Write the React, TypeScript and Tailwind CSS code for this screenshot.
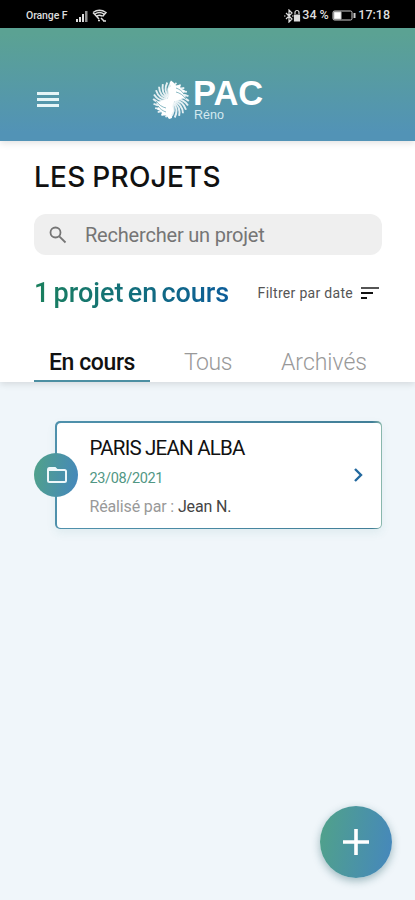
import React from "react";

const blades = Array.from({ length: 24 }, (_, i) => (i * 360) / 24);

function Swirl() {
  return (
    <svg viewBox="-20 -20 40 40" className="h-10 w-10">
      {blades.map((a) => (
        <path key={a} transform={`rotate(${a})`} d="M-.5 -4C-1.500 -9 1 -14 5.500 -17" fill="none" stroke="#fff" strokeWidth="1.900" opacity=".85" />
      ))}
      <path
        fill="#fff"
        d="M-1.500 -17L0 -19.500L2.500 -17.500L5 -14.500L9 -15L9.500 -11.500L14 -9.500L12 -6L15 -3L10 -1L4 1L1.500 5L2.500 11L.5 15L1 18L-2 19L-4.500 15.500L-9 15.500L-9.500 11.500L-14 9.500L-12 6L-15 3L-10 1L-4 -1L-1.500 -5L-3 -11L-.5 -14Z"
      />
      <path d="M5 -8C9 -7 12 -5 15 -1M5 -12C8 -11 11 -9 13 -6M-5 8C-9 7 -12 5 -15 1M-5 12C-8 11 -11 9 -13 6" fill="none" stroke="#589caa" strokeWidth=".7" />
    </svg>
  );
}

function StatusBar() {
  return (
    <div className="flex h-7 shrink-0 items-center bg-black pt-[3px] pl-[26px] text-[10.500px] font-medium text-[#ddd]">
      <span className="w-[50px] tracking-[-0.1px] whitespace-nowrap">Orange F</span>
      <svg viewBox="0 0 12 12" className="h-3 w-3" fill="#ddd">
        <path d="M0 9h2v3H0zM3 7h2v5H3zM6 4h2v8H6z" />
        <path d="M9 1h2.500v11H9z" opacity=".65" />
      </svg>
      <svg viewBox="0 0 15 13" className="ml-1 h-[13px] w-[15px]" fill="none" stroke="#ddd" strokeWidth="1.500">
        <path d="M1 3.500Q7.500 -1 14 3.500L10.500 7.500M1 3.500L7 10M3 5Q7.500 2 12 5M5 7Q7.500 5.500 10 7M6 11.500h2M9 9l3 3M11 12h3" />
      </svg>
      <div className="ml-auto flex items-center pr-[25px]">
        <svg viewBox="0 0 17 14" className="h-3.5 w-[17px]" fill="none" stroke="#ddd" strokeWidth="1.200">
          <path d="M2 4l6 6-3 3V1l3 3-6 6M0 7h1.500M8 7h1.500" />
          <path d="M11 5V3.500a2 2 0 0 1 4 0V5" />
          <path d="M10.500 6h5v6h-5z" fill="#ddd" />
        </svg>
        <span className="ml-px w-[30px] text-[12.500px] whitespace-nowrap">34 %</span>
        <svg viewBox="0 0 24 11" className="h-[11px] w-6" fill="none" stroke="#ccc">
          <rect x="1" y="1" width="19" height="9" rx="1.500" />
          <path d="M2 2h7v7H2z" fill="#fff" />
          <path d="M22.500 3v5" strokeWidth="2" />
        </svg>
        <span className="ml-0.5 text-[12.500px]">17:18</span>
      </div>
    </div>
  );
}

export default function App() {
  return (
    <div className="flex h-[900px] w-[415px] flex-col overflow-hidden bg-[#f0f6fa] font-['Roboto','Liberation_Sans',sans-serif] text-black">
      <StatusBar />
      <header className="relative z-10 flex h-[113px] shrink-0 items-center bg-[linear-gradient(180deg,#5ba293_5%,#5293b6_92%)] pt-[30px] pl-[37px] shadow-[0_2px_7px_rgba(0,0,0,0.12)]">
        <div className="flex w-[22px] flex-col gap-[3px]">
          <div className="h-[3px] bg-[#e6f5f7]" />
          <div className="h-[3px] bg-[#e6f5f7]" />
          <div className="h-[3px] bg-[#e6f5f7]" />
        </div>
        <div className="ml-[92px] flex items-center">
          <Swirl />
          <div className="ml-0.5 h-[43px] font-['Liberation_Sans',sans-serif] text-white">
            <div className="h-[31px] text-[34.500px] leading-[31px] font-bold">PAC</div>
            <div className="pl-px text-[12.500px] leading-[12px] text-[#d5eaf0]">Réno</div>
          </div>
        </div>
      </header>
      <section className="relative flex h-[241px] shrink-0 flex-col bg-white pr-[33px] pl-[34px] shadow-[0_2px_7px_rgba(0,0,0,0.12)]">
        <h1 className="mt-[18px] h-9 font-['Inter',sans-serif] text-[28px] leading-9 font-medium tracking-[0.25px] whitespace-nowrap text-[#111] [word-spacing:-1px]">LES PROJETS</h1>
        <div className="mt-[19px] flex h-[41px] items-center rounded-[12px] bg-[#efefef] text-[#757575]">
          <svg viewBox="0 0 18 18" className="ml-[15px] h-[18px] w-[18px]" fill="none" stroke="currentColor" strokeWidth="1.800">
            <circle cx="6.500" cy="6.500" r="5" />
            <path d="M10.300 10.300L16.500 16.500" />
          </svg>
          <span className="ml-[18px] text-[20px] tracking-[-0.2px]">Rechercher un projet</span>
        </div>
        <div className="mt-[18px] flex h-10 items-center justify-between whitespace-nowrap">
          <span className="bg-[linear-gradient(90deg,#1a805d,#0c5d9a)] bg-clip-text text-[27px] font-medium text-transparent [word-spacing:-2.500px]">1 projet en cours</span>
          <span className="flex items-center pr-[3px] text-[14px] tracking-[0.3px] text-[#555]">
            Filtrer par date
            <svg viewBox="0 0 18 12" className="ml-2 h-3 w-[18px]" fill="none" strokeWidth="2">
              <path d="M0 1h18" stroke="#555" />
              <path d="M0 6h12M0 11h6" stroke="#111" />
            </svg>
          </span>
        </div>
        <nav className="mt-auto flex h-10 text-[23px] whitespace-nowrap text-[#999]">
          <div className="flex w-[116px] items-center justify-center border-b-2 border-[#4c8fa2] pt-1 font-medium tracking-[-0.4px] text-[#111]">En cours</div>
          <div className="flex w-[116px] items-center justify-center pt-[3px] font-light tracking-[-0.4px]">Tous</div>
          <div className="flex w-[116px] items-center justify-center pt-[3px] font-light">Archivés</div>
        </nav>
      </section>
      <main className="relative flex-1 pt-[39px] pr-[33px] pl-[34px]">
        <article className="flex h-[108px] items-center">
          <div className="z-10 flex h-11 w-11 shrink-0 items-center justify-center rounded-full bg-[linear-gradient(100deg,#50a18b_5%,#4688bb_95%)]">
            <svg viewBox="0 0 20 16" className="ml-px h-4 w-5" fill="none" stroke="#edf7fa" strokeWidth="2">
              <path d="M1 3V13.500Q1 15 2.500 15H17.500Q19 15 19 13.500V4.500Q19 3 17.500 3H10L8 1H2.500Q1 1 1 3Z" />
              <path d="M2 3h8" />
            </svg>
          </div>
          <div className="-ml-[23px] flex h-[108px] flex-1 items-center rounded-[5px] bg-[linear-gradient(90deg,#4f91ac,#427f98_97%,#8dbaae)] p-[1.500px] shadow-[0_4px_10px_rgba(60,130,130,0.09)]">
            <div className="flex h-full w-full items-center rounded-[4px] bg-white pr-[18px] pl-[33px]">
              <div className="flex-1 pt-[3px] whitespace-nowrap">
                <div className="h-[28px] text-[20.500px] leading-[28px] tracking-[-0.800px] text-[#111]">PARIS JEAN ALBA</div>
                <div className="mt-1 h-[26px] text-[14.500px] leading-[26px] tracking-[-0.35px] text-[#519784]">23/08/2021</div>
                <div className="h-[28px] text-[16px] leading-[30px] tracking-[-0.15px] text-[#999]">Réalisé par : <span className="text-[#444]">Jean N.</span></div>
              </div>
              <svg viewBox="0 0 9 14" className="h-3.5 w-[9px]" fill="none" stroke="#23699f" strokeWidth="2.400">
                <path d="M1 1l6 6-6 6" />
              </svg>
            </div>
          </div>
        </article>
        <button aria-label="Ajouter" className="absolute right-[23px] bottom-[22px] flex h-[72px] w-[72px] items-center justify-center rounded-full bg-[linear-gradient(100deg,#50a18b_5%,#4688bb_95%)] shadow-[0_3px_8px_rgba(30,90,100,0.4)]">
          <svg viewBox="0 0 26 26" className="h-[26px] w-[26px]" fill="none" stroke="#fff" strokeWidth="3.600">
            <path d="M13 0v26M0 13h26" />
          </svg>
        </button>
      </main>
    </div>
  );
}
